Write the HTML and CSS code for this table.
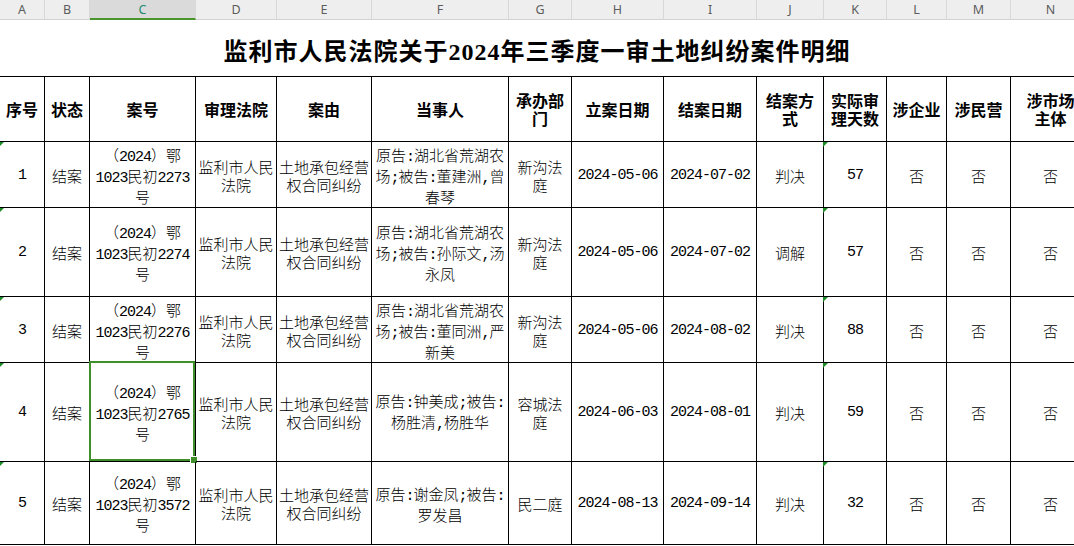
FILE: index.html
```html
<!DOCTYPE html>
<html lang="zh-CN">
<head>
<meta charset="utf-8">
<title>监利市人民法院关于2024年三季度一审土地纠纷案件明细</title>
<link rel="stylesheet" href="styles.css">
</head>
<body>
<div class="sheet">
  <div class="colbar">
    <div>A</div><div>B</div><div class="on">C</div><div>D</div><div>E</div><div>F</div><div>G</div><div>H</div><div>I</div><div>J</div><div>K</div><div>L</div><div>M</div><div>N</div>
  </div>
  <div class="title">监利市人民法院关于2024年三季度一审土地纠纷案件明细</div>
  <div class="grid">
    <div class="c h"><p>序号</p></div>
    <div class="c h"><p>状态</p></div>
    <div class="c h"><p>案号</p></div>
    <div class="c h"><p>审理法院</p></div>
    <div class="c h"><p>案由</p></div>
    <div class="c h"><p>当事人</p></div>
    <div class="c h"><p>承办部<br>门</p></div>
    <div class="c h"><p>立案日期</p></div>
    <div class="c h"><p>结案日期</p></div>
    <div class="c h"><p>结案方<br>式</p></div>
    <div class="c h"><p>实际审<br>理天数</p></div>
    <div class="c h"><p>涉企业</p></div>
    <div class="c h"><p>涉民营</p></div>
    <div class="c h"><p>涉市场<br>主体</p></div>

    <div class="c t"><p class="n">1</p></div>
    <div class="c"><p>结案</p></div>
    <div class="c"><p>（<span class="n">2024</span>）鄂<br><span class="n">1023</span>民初<span class="n">2273</span><br>号</p></div>
    <div class="c"><p>监利市人民<br>法院</p></div>
    <div class="c"><p>土地承包经营<br>权合同纠纷</p></div>
    <div class="c"><p>原告<span class="n">:</span>湖北省荒湖农<br>场<span class="n">;</span>被告<span class="n">:</span>董建洲<span class="n">,</span>曾<br>春琴</p></div>
    <div class="c"><p>新沟法<br>庭</p></div>
    <div class="c"><p class="n">2024-05-06</p></div>
    <div class="c"><p class="n">2024-07-02</p></div>
    <div class="c"><p>判决</p></div>
    <div class="c t"><p class="n">57</p></div>
    <div class="c"><p>否</p></div>
    <div class="c"><p>否</p></div>
    <div class="c"><p>否</p></div>

    <div class="c t"><p class="n">2</p></div>
    <div class="c"><p>结案</p></div>
    <div class="c"><p>（<span class="n">2024</span>）鄂<br><span class="n">1023</span>民初<span class="n">2274</span><br>号</p></div>
    <div class="c"><p>监利市人民<br>法院</p></div>
    <div class="c"><p>土地承包经营<br>权合同纠纷</p></div>
    <div class="c"><p>原告<span class="n">:</span>湖北省荒湖农<br>场<span class="n">;</span>被告<span class="n">:</span>孙际文<span class="n">,</span>汤<br>永凤</p></div>
    <div class="c"><p>新沟法<br>庭</p></div>
    <div class="c"><p class="n">2024-05-06</p></div>
    <div class="c"><p class="n">2024-07-02</p></div>
    <div class="c"><p>调解</p></div>
    <div class="c t"><p class="n">57</p></div>
    <div class="c"><p>否</p></div>
    <div class="c"><p>否</p></div>
    <div class="c"><p>否</p></div>

    <div class="c t"><p class="n">3</p></div>
    <div class="c"><p>结案</p></div>
    <div class="c"><p>（<span class="n">2024</span>）鄂<br><span class="n">1023</span>民初<span class="n">2276</span><br>号</p></div>
    <div class="c"><p>监利市人民<br>法院</p></div>
    <div class="c"><p>土地承包经营<br>权合同纠纷</p></div>
    <div class="c"><p>原告<span class="n">:</span>湖北省荒湖农<br>场<span class="n">;</span>被告<span class="n">:</span>董同洲<span class="n">,</span>严<br>新美</p></div>
    <div class="c"><p>新沟法<br>庭</p></div>
    <div class="c"><p class="n">2024-05-06</p></div>
    <div class="c"><p class="n">2024-08-02</p></div>
    <div class="c"><p>判决</p></div>
    <div class="c t"><p class="n">88</p></div>
    <div class="c"><p>否</p></div>
    <div class="c"><p>否</p></div>
    <div class="c"><p>否</p></div>

    <div class="c t"><p class="n">4</p></div>
    <div class="c"><p>结案</p></div>
    <div class="c"><p>（<span class="n">2024</span>）鄂<br><span class="n">1023</span>民初<span class="n">2765</span><br>号</p><span class="sel"></span></div>
    <div class="c"><p>监利市人民<br>法院</p></div>
    <div class="c"><p>土地承包经营<br>权合同纠纷</p></div>
    <div class="c"><p>原告<span class="n">:</span>钟美成<span class="n">;</span>被告<span class="n">:</span><br>杨胜清<span class="n">,</span>杨胜华</p></div>
    <div class="c"><p>容城法<br>庭</p></div>
    <div class="c"><p class="n">2024-06-03</p></div>
    <div class="c"><p class="n">2024-08-01</p></div>
    <div class="c"><p>判决</p></div>
    <div class="c t"><p class="n">59</p></div>
    <div class="c"><p>否</p></div>
    <div class="c"><p>否</p></div>
    <div class="c"><p>否</p></div>

    <div class="c t"><p class="n">5</p></div>
    <div class="c"><p>结案</p></div>
    <div class="c"><p>（<span class="n">2024</span>）鄂<br><span class="n">1023</span>民初<span class="n">3572</span><br>号</p></div>
    <div class="c"><p>监利市人民<br>法院</p></div>
    <div class="c"><p>土地承包经营<br>权合同纠纷</p></div>
    <div class="c"><p>原告<span class="n">:</span>谢金凤<span class="n">;</span>被告<span class="n">:</span><br>罗发昌</p></div>
    <div class="c"><p>民二庭</p></div>
    <div class="c"><p class="n">2024-08-13</p></div>
    <div class="c"><p class="n">2024-09-14</p></div>
    <div class="c"><p>判决</p></div>
    <div class="c t"><p class="n">32</p></div>
    <div class="c"><p>否</p></div>
    <div class="c"><p>否</p></div>
    <div class="c"><p>否</p></div>
  </div>
</div>
</body>
</html>
```
FILE: styles.css
```css
* { box-sizing: border-box; }
html, body {
  margin: 0;
  padding: 0;
  height: 546px;
  overflow: hidden;
  background: #ffffff;
}
body {
  font-family: "Noto Sans CJK SC", sans-serif;
  color: #000;
}
p { margin: 0; }
.sheet {
  width: 1091px;
}
.colbar,
.grid {
  display: grid;
  grid-template-columns: 45px 45px 106px 81px 95px 137px 63px 92px 93px 67px 63px 60px 64px 80px;
}
.colbar {
  height: 20px;
}
.colbar div {
  background: #eeeeee;
  border-right: 1px solid #d8d8d8;
  border-bottom: 1px solid #d2d2d2;
  display: flex;
  align-items: center;
  justify-content: center;
  font-family: "Noto Sans", "Liberation Sans", sans-serif;
  font-size: 12.5px;
  color: #5c5c5c;
}
.colbar .on {
  background: #dadada;
  color: #1d8a6e;
  border-bottom: 2px solid #47962a;
}
.title {
  height: 56px;
  display: flex;
  align-items: center;
  justify-content: center;
  padding-top: 3px;
  font-family: "Liberation Serif", "Noto Sans CJK SC", serif;
  font-weight: 700;
  font-size: 24px;
  letter-spacing: 1px;
  width: 1074px;
}
.grid {
  grid-template-rows: 66px 66px 89px 66px 99px 83px;
}
.c {
  position: relative;
  border-right: 1px solid #000;
  border-bottom: 1px solid #000;
  display: flex;
  align-items: center;
  justify-content: center;
  text-align: center;
  font-size: 15px;
  font-weight: 300;
  line-height: 18px;
  white-space: nowrap;
}
.c p {
  padding-top: 2px;
}
.h {
  border-top: 1px solid #000;
  font-weight: 700;
  font-size: 16px;
}
.h p {
  padding-top: 0;
}
.n {
  font-family: "Liberation Mono", monospace;
  font-weight: 400;
  font-size: 15px;
  letter-spacing: -1px;
}
.t::before {
  content: "";
  position: absolute;
  left: -1px;
  top: 0;
  border-top: 5px solid #1f8b24;
  border-right: 5px solid transparent;
}
.sel {
  position: absolute;
  left: -1px;
  top: -2px;
  right: 0;
  bottom: 0;
  border: 2px solid #3f8f2b;
}
.sel::after {
  content: "";
  position: absolute;
  right: -5px;
  bottom: -5px;
  width: 6px;
  height: 6px;
  background: #3f8f2b;
  border: 1px solid #fff;
}
```
